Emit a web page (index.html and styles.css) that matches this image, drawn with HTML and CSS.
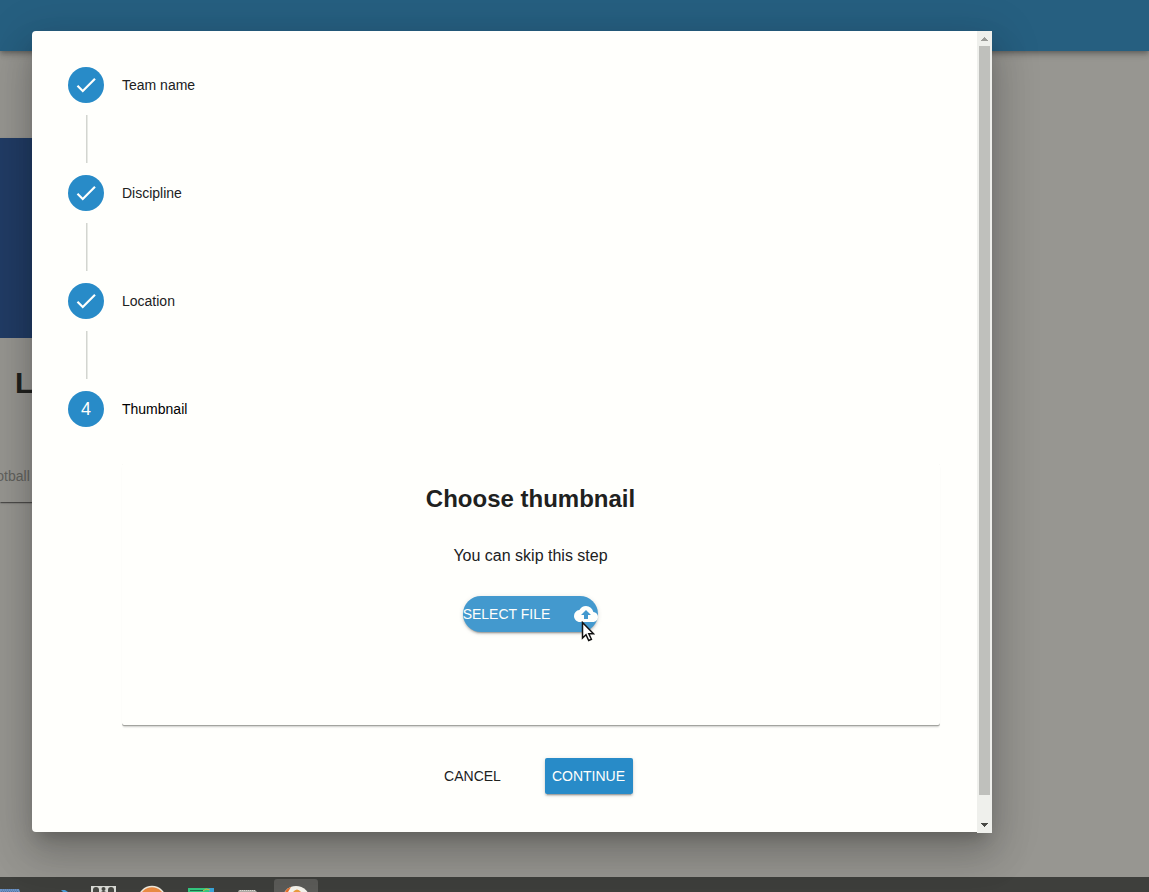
FILE: index.html
```html
<!DOCTYPE html>
<html lang="en">
<head>
<meta charset="utf-8">
<title>Create team</title>
<link rel="stylesheet" href="styles.css">
</head>
<body>
<header class="toolbar"></header>
<main class="page">
  <article class="card">
    <div class="card-image"></div>
    <h2 class="card-title">L</h2>
    <p class="card-text">Football</p>
  </article>
</main>
<footer class="taskbar">
  <svg class="tasks" width="340" height="15" viewBox="0 0 340 15" aria-hidden="true">
    <path d="M0 12h19l1 3H0z" fill="#6d93c6"/><path d="M2 13h16M1 14.500h18" stroke="#55749f" stroke-dasharray="1 1"/>
    <path d="M61 13l4 0 3 2h-5z" fill="#4b9bd3"/>
    <path d="M91 9h25v6H91z" fill="#d9dad5"/><g fill="#484944"><rect x="93" y="10" width="6" height="8" rx="3"/><circle cx="103.500" cy="12" r="2"/><path d="M101 15q2.500-2 5 0z"/><rect x="108" y="10" width="6" height="8" rx="3"/></g>
    <circle cx="152" cy="23" r="13.500" fill="#e88b43" stroke="#efe9dc" stroke-width="1.500"/>
    <path d="M188 11h21v4h-21z" fill="#35c77f"/><path d="M209 11h5v4h-5z" fill="#3aa5d8"/><path d="M190 13.500h13" stroke="#1b6d47"/><path d="M203 14l3-2 4 1" stroke="#d5b53f" fill="none"/>
    <path d="M238 15l1-2h16l2 2z" fill="#aaa9a3"/><path d="M240 13.500h15" stroke="#d7d6d0" stroke-dasharray="1 1"/>
    <rect x="274" y="2" width="44" height="18" rx="3" fill="#5b5b58"/>
    <circle cx="296" cy="23" r="14" fill="#f4f2eb"/><path d="M285 15q2-4 6-5l-3 5z" fill="#e36e2a"/><path d="M293 15q4-5 8 0z" fill="#e99a3c"/>
  </svg>
</footer>

<div class="overlay">
  <section class="dialog" role="dialog" aria-label="Create team">
    <div class="dialog-content">
      <ol class="stepper">
        <li class="step">
          <div class="step-head"><span class="badge"><svg width="26" height="26" viewBox="0 0 24 24"><path d="M9 16.170 4.830 12l-1.420 1.410L9 19 21 7l-1.410-1.410z"/></svg></span><span class="step-label">Team name</span></div>
          <div class="connector"></div>
        </li>
        <li class="step">
          <div class="step-head"><span class="badge"><svg width="26" height="26" viewBox="0 0 24 24"><path d="M9 16.170 4.830 12l-1.420 1.410L9 19 21 7l-1.410-1.410z"/></svg></span><span class="step-label">Discipline</span></div>
          <div class="connector"></div>
        </li>
        <li class="step">
          <div class="step-head"><span class="badge"><svg width="26" height="26" viewBox="0 0 24 24"><path d="M9 16.170 4.830 12l-1.420 1.410L9 19 21 7l-1.410-1.410z"/></svg></span><span class="step-label">Location</span></div>
          <div class="connector"></div>
        </li>
        <li class="step">
          <div class="step-head"><span class="badge">4</span><span class="step-label current">Thumbnail</span></div>
          <div class="step-body">
            <div class="panel">
              <h1 class="panel-title">Choose thumbnail</h1>
              <p class="panel-text">You can skip this step</p>
              <button type="button" class="select-file">SELECT FILE
                <svg class="cloud" width="24" height="24" viewBox="0 0 24 24" aria-hidden="true"><path d="M19.350 10.040A7.490 7.490 0 0 0 12 4C9.110 4 6.600 5.640 5.350 8.040A5.994 5.994 0 0 0 0 14c0 3.310 2.690 6 6 6h13c2.760 0 5-2.240 5-5 0-2.640-2.050-4.780-4.650-4.960zM14 13v4h-4v-4H7l5-5 5 5h-3z"/></svg>
                <svg class="pointer" width="14" height="21" viewBox="0 0 14 21" aria-hidden="true"><path d="M1.500 1.500v15.500l3.500-3.300 2.700 5.800 2.700-1.200-2.600-5.600h4.700z"/></svg>
              </button>
            </div>
            <div class="actions">
              <button type="button" class="btn">CANCEL</button>
              <button type="button" class="btn primary">CONTINUE</button>
            </div>
          </div>
        </li>
      </ol>
    </div>
    <div class="scrollbar" aria-hidden="true">
      <svg width="15" height="15"><path d="M7 6h1v1h1v1h1v1h1v1H4V9h1V8h1V7h1z" fill="#9b9c98"/></svg>
      <div class="track"><div class="thumb"></div></div>
      <svg width="15" height="15"><path d="M4 5h7v1h-1v1H9v1H8v1H7V8H6V7H5V6H4z" fill="#484945"/></svg>
    </div>
  </section>
</div>
</body>
</html>
```
FILE: styles.css
```css
* { box-sizing: border-box; }
body {
  margin: 0;
  min-height: 100vh;
  display: flex;
  flex-direction: column;
  position: relative;
  overflow: hidden;
  background: #979691;
  color: #20211e;
  font-family: "Liberation Sans", Arial, sans-serif;
  font-size: 14px;
}
h1, h2, p, ol { margin: 0; padding: 0; }
button { font: inherit; border: 0; cursor: pointer; }

.toolbar {
  height: 51px;
  background: #265f80;
  box-shadow: 0 2px 4px -1px rgba(0, 0, 0, .2), 0 4px 5px rgba(0, 0, 0, .14), 0 1px 10px rgba(0, 0, 0, .12);
}
.page { flex: 1; padding-top: 87px; }
.card {
  width: 300px;
  height: 364px;
  background: #979691;
  box-shadow: 0 2px 1px -1px rgba(0, 0, 0, .3), 0 1px 1px rgba(0, 0, 0, .2), 0 1px 3px rgba(0, 0, 0, .12);
}
.card-image { height: 200px; background: #213c65; }
.card-title { padding: 28px 0 0 15px; font-size: 30px; line-height: 34px; }
.card-text { margin-left: -20px; padding-top: 68px; line-height: 16px; color: #62625e; }
.taskbar { height: 15px; background: #3e3f3c; }
.tasks { display: block; }

.overlay {
  position: absolute;
  inset: 0;
  padding: 31px 157px 59px 32px;
}
.dialog {
  display: flex;
  background: #fffffc;
  border-radius: 4px 0 0 4px;
  box-shadow: 0 11px 15px -7px rgba(0, 0, 0, .2), 0 24px 38px 3px rgba(0, 0, 0, .14), 0 9px 46px 8px rgba(0, 0, 0, .12);
}
.dialog-content { flex: 1; padding: 36px 37px 38px 36px; }
.scrollbar {
  width: 15px;
  display: flex;
  flex-direction: column;
  margin-bottom: -1px;
  background: #eff0ec;
}
.scrollbar svg { display: block; }
.track { flex: 1; padding: 0 2px; }
.thumb { height: 97%; background: #bfc0bc; }

.stepper { list-style: none; }
.step-head { display: flex; align-items: center; gap: 18px; }
.badge {
  width: 36px;
  height: 36px;
  display: flex;
  align-items: center;
  justify-content: center;
  border-radius: 50%;
  background: #288bc8;
  color: #fffffc;
  font-size: 18px;
}
.badge svg { fill: #fffffc; }
.step-label { line-height: 16px; }
.current { color: #000; }
.connector {
  width: 2px;
  height: 48px;
  margin: 12px 0 12px 18px;
  border-left: 1px solid #d3d5d0;
  background: #e8eae5;
}
.step-body { margin: 36px 0 0 54px; }

.panel {
  height: 262px;
  padding: 22px 1px 0 0;
  display: flex;
  flex-direction: column;
  align-items: center;
  border-radius: 2px;
  box-shadow: 0 1px 0 #a3a49f, 0 3px 2px -1px rgba(0, 0, 0, .2);
}
.panel-title { font-size: 24px; line-height: 28px; }
.panel-text { padding: 33px 0 31px; font-size: 16px; line-height: 19px; }
.select-file {
  position: relative;
  height: 36px;
  display: flex;
  align-items: center;
  gap: 24px;
  padding: 0;
  border-radius: 18px;
  background: #4399ce;
  color: #fffffc;
  box-shadow: 0 3px 1px -2px rgba(0, 0, 0, .2), 0 2px 2px rgba(0, 0, 0, .14), 0 1px 5px rgba(0, 0, 0, .12);
}
.cloud { fill: #fffffc; }
.pointer {
  position: absolute;
  left: 118px;
  top: 25px;
  fill: #fff;
  stroke: #111;
  stroke-width: 1.500;
}
.actions { display: flex; justify-content: center; gap: 28px; padding: 33px 1px 0 0; }
.btn {
  min-width: 88px;
  height: 36px;
  padding: 0 6px;
  border-radius: 2px;
  background: transparent;
  color: #20211e;
}
.primary {
  background: #288bc8;
  color: #fffffc;
  box-shadow: 0 3px 1px -2px rgba(0, 0, 0, .2), 0 2px 2px rgba(0, 0, 0, .14), 0 1px 5px rgba(0, 0, 0, .12);
}
```
